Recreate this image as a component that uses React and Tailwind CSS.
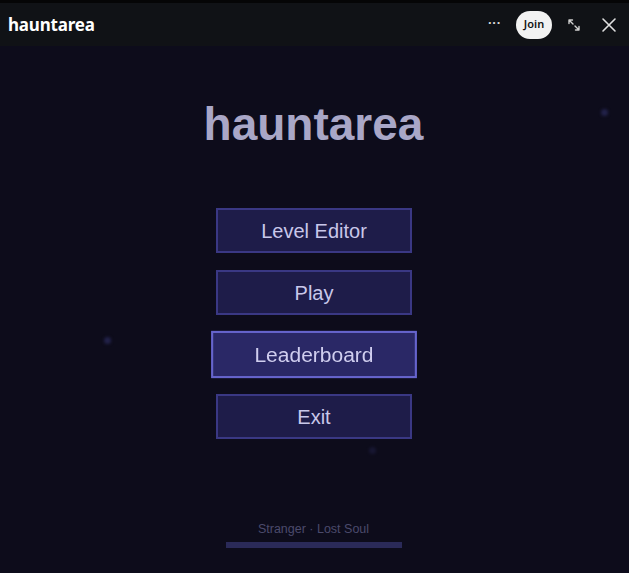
import React from 'react';

const items = ['Level Editor', 'Play', 'Leaderboard', 'Exit'];

const Header = () => (
  <div className="h-[46px] bg-[#101216] border-t-[3px] border-[#050506] flex items-center pl-2 pr-3 shrink-0">
    <span className="text-white text-[17px] font-bold tracking-[-0.2px]" style={{ fontFamily: '"Noto Sans", "Open Sans", sans-serif' }}>
      hauntarea
    </span>
    <div className="ml-auto flex items-center">
      <span className="text-[#d8d8d8] text-[13px] leading-none mr-[15px] -mt-1 font-bold">···</span>
      <button className="w-[36px] h-[28px] rounded-full bg-[#f2f2f2] text-[#111] text-[11px] font-semibold flex items-center justify-center" style={{ fontFamily: '"Noto Sans", sans-serif' }}>
        Join
      </button>
      <svg className="ml-[15px]" width="14" height="14" viewBox="0 0 14 14" fill="none" stroke="#d0d0d0" strokeWidth="1.4" strokeLinecap="round">
        <path d="M2 2 L6 6 M2 2 L2 5.5 M2 2 L5.5 2" />
        <path d="M12 12 L8 8 M12 12 L12 8.5 M12 12 L8.5 12" />
      </svg>
      <svg className="ml-[20px]" width="16" height="16" viewBox="0 0 16 16" fill="none" stroke="#e0e0e0" strokeWidth="1.6" strokeLinecap="round">
        <path d="M2 2 L14 14 M14 2 L2 14" />
      </svg>
    </div>
  </div>
);

const Dot = ({ className }) => (
  <div className={`absolute w-[7px] h-[7px] rounded-full bg-[#22224a] blur-[1.5px] ${className}`} />
);

export default function App() {
  return (
    <div className="w-[629px] h-[573px] flex flex-col bg-[#0d0c1b] overflow-hidden" style={{ fontFamily: '"Liberation Sans", Arial, sans-serif' }}>
      <Header />
      <div className="relative flex-1 flex flex-col items-center pt-[55px] pb-[25px]">
        <Dot className="left-[601px] top-[63px]" />
        <Dot className="left-[104px] top-[291px]" />
        <Dot className="left-[369px] top-[401px] opacity-50" />
        <h1 className="text-[46px] leading-none font-bold text-[#a9a7c7] -ml-[2px]">hauntarea</h1>
        <div className="mt-[61px] flex flex-col gap-[17px] -ml-px">
          {items.map(label => (
            <button
              key={label}
              className={
                label === 'Leaderboard'
                  ? 'w-[196px] h-[45px] scale-105 bg-[#2a2866] border-2 border-[#6664cc] text-[#d0ceef] text-[20px]'
                  : 'w-[196px] h-[45px] bg-[#1e1c49] border-2 border-[#3a3884] text-[#c9c7ea] text-[20px]'
              }
            >
              {label}
            </button>
          ))}
        </div>
        <div className="mt-auto flex flex-col items-center -ml-[2px]">
          <span className="text-[12.5px] leading-[14px] text-[#4b4a6b]">Stranger · Lost Soul</span>
          <div className="mt-[6px] w-[176px] h-[6px] bg-[#2a2a58]" />
        </div>
      </div>
    </div>
  );
}
